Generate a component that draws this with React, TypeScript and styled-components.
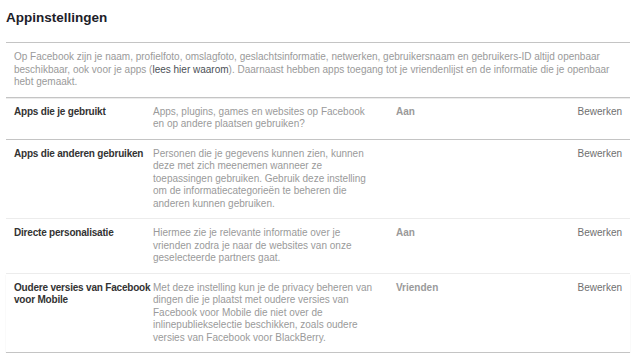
import styled, { createGlobalStyle } from "styled-components";

const GlobalStyle = createGlobalStyle`
  body {
    margin: 0;
    background: #fff;
    font-family: "Liberation Sans", Arial, sans-serif;
  }
`;

const Page = styled.div`
  padding: 0 10px 0 6px;
`;

const Title = styled.h1`
  margin: 0;
  padding: 10px 0 16px;
  font-size: 13.5px;
  line-height: 16px;
  font-weight: bold;
  color: #1d2129;
  border-bottom: 1px solid #c4c4c4;
`;

const Intro = styled.p`
  margin: 0;
  padding: 8px;
  font-size: 10px;
  line-height: 12.5px;
  color: #9a9a9a;
  border-bottom: 1px solid #c4c4c4;
  box-shadow: 0 1px 0 #ececec;

  b {
    font-weight: normal;
    color: #4b4f56;
  }
`;

const Row = styled.div<{ $strong?: boolean; $last?: boolean }>`
  display: grid;
  grid-template-columns: 139px 243px 1fr auto;
  padding: 8px;
  font-size: 10px;
  line-height: 12.5px;
  border-bottom: 1px solid ${(p) => (p.$strong ? "#c4c4c4" : "#ececec")};
  box-shadow: ${(p) => (p.$last ? "0 1px 1px #e2e2e2" : "none")};
`;

const Label = styled.div`
  font-weight: bold;
  color: #333;
  letter-spacing: -0.2px;
`;

const Description = styled.div`
  color: #9a9a9a;
  max-width: 221px;
`;

const Value = styled.div`
  font-weight: bold;
  color: #9a9a9a;
`;

const Edit = styled.a`
  color: #6f6f6f;
  cursor: pointer;
`;

const settings = [
  {
    label: "Apps die je gebruikt",
    description:
      "Apps, plugins, games en websites op Facebook en op andere plaatsen gebruiken?",
    value: "Aan",
    strong: true,
  },
  {
    label: "Apps die anderen gebruiken",
    description:
      "Personen die je gegevens kunnen zien, kunnen deze met zich meenemen wanneer ze toepassingen gebruiken. Gebruik deze instelling om de informatiecategorieën te beheren die anderen kunnen gebruiken.",
    value: "",
  },
  {
    label: "Directe personalisatie",
    description:
      "Hiermee zie je relevante informatie over je vrienden zodra je naar de websites van onze geselecteerde partners gaat.",
    value: "Aan",
  },
  {
    label: "Oudere versies van Facebook voor Mobile",
    description:
      "Met deze instelling kun je de privacy beheren van dingen die je plaatst met oudere versies van Facebook voor Mobile die niet over de inlinepubliekselectie beschikken, zoals oudere versies van Facebook voor BlackBerry.",
    value: "Vrienden",
    strong: true,
    last: true,
  },
];

const App = () => {
  return (
    <Page>
      <GlobalStyle />
      <Title>Appinstellingen</Title>
      <Intro>
        Op Facebook zijn je naam, profielfoto, omslagfoto, geslachtsinformatie,
        netwerken, gebruikersnaam en gebruikers-ID altijd openbaar beschikbaar,
        ook voor je apps (<b>lees hier waarom</b>). Daarnaast hebben apps
        toegang tot je vriendenlijst en de informatie die je openbaar hebt
        gemaakt.
      </Intro>
      {settings.map((s) => (
        <Row key={s.label} $strong={s.strong} $last={s.last}>
          <Label>{s.label}</Label>
          <Description>{s.description}</Description>
          <Value>{s.value}</Value>
          <Edit>Bewerken</Edit>
        </Row>
      ))}
    </Page>
  );
};

export default App;
